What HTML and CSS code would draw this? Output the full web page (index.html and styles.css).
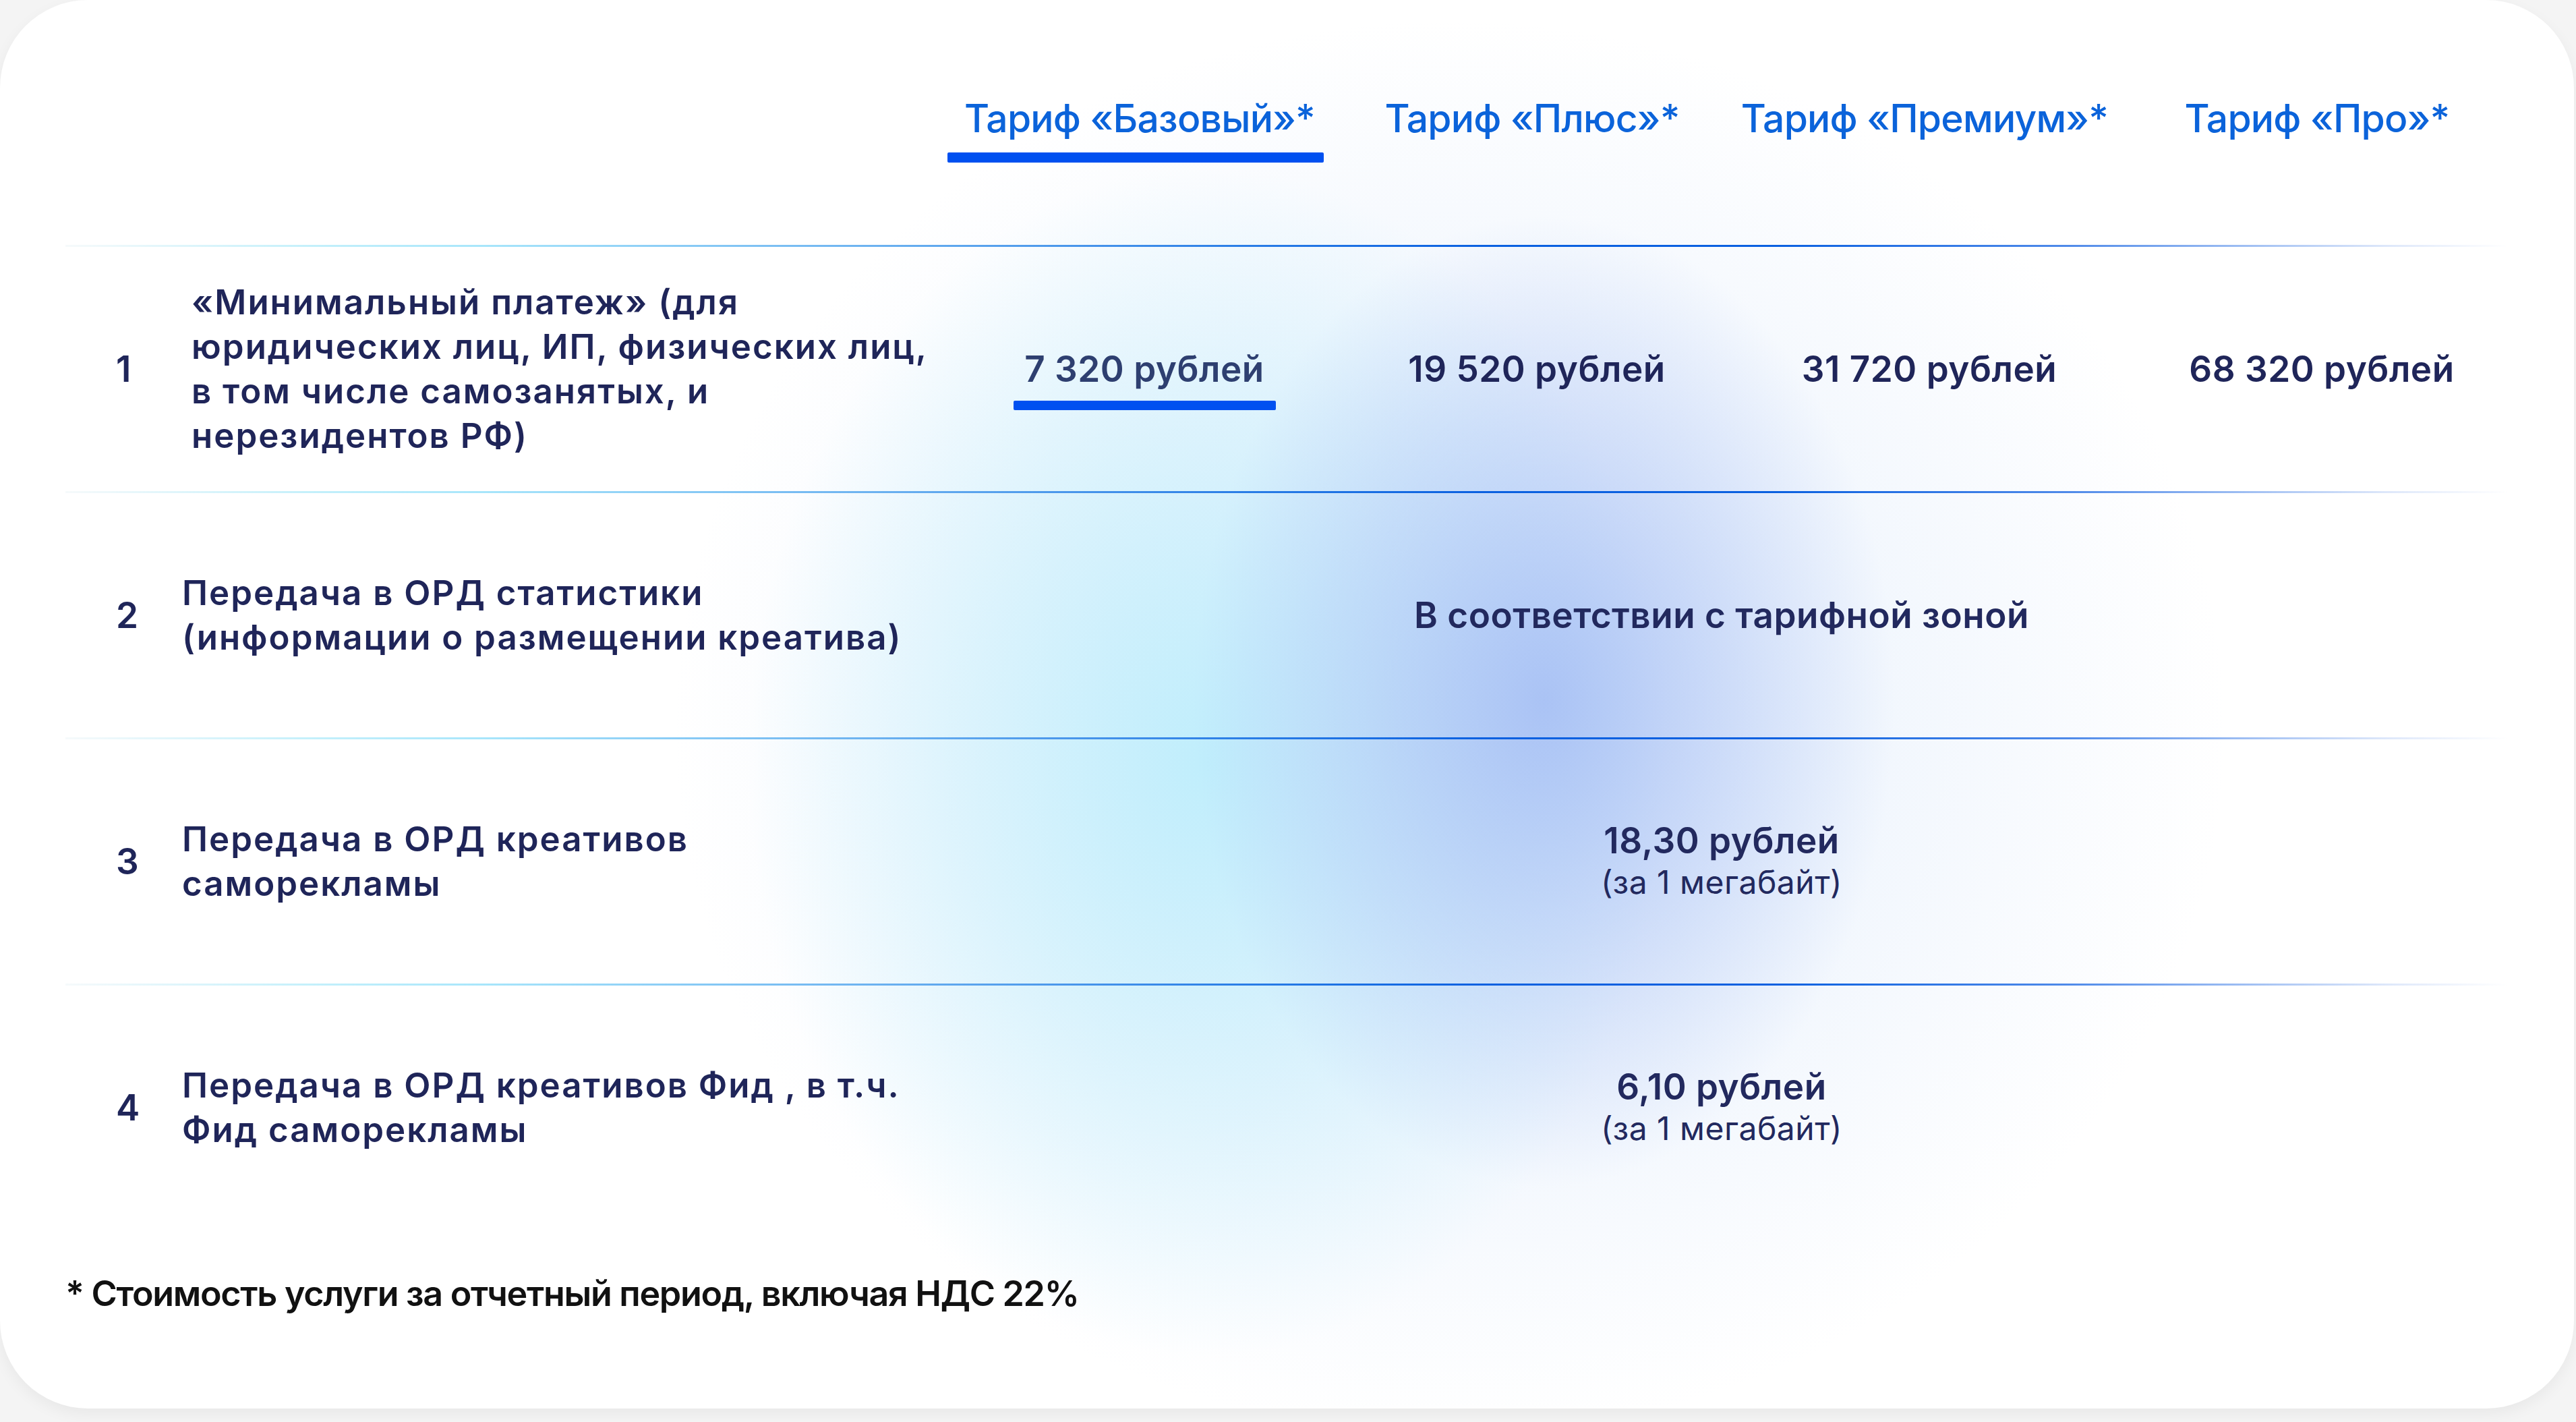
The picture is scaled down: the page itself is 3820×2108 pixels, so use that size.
FILE: index.html
```html
<!DOCTYPE html>
<html lang="ru">
<head>
<meta charset="utf-8">
<title>Тарифы</title>
<link rel="stylesheet" href="styles.css">
</head>
<body>
<div class="card">
  <div class="table">
    <div class="head">
      <div class="cell-empty"></div>
      <div class="cell-empty"></div>
      <div class="tab active"><span class="tab-text">Тариф «Базовый»*</span><span class="tab-bar"></span></div>
      <div class="tab"><span class="tab-text">Тариф «Плюс»*</span></div>
      <div class="tab"><span class="tab-text">Тариф «Премиум»*</span></div>
      <div class="tab"><span class="tab-text">Тариф «Про»*</span></div>
    </div>
    <div class="rule"></div>
    <div class="row">
      <div class="num">1</div>
      <div class="desc desc-first">«Минимальный платеж» (для<br>юридических лиц, ИП, физических лиц,<br>в том числе самозанятых, и<br>нерезидентов РФ)</div>
      <div class="price active"><span class="price-text">7 320 рублей</span><span class="price-bar"></span></div>
      <div class="price"><span class="price-text">19 520 рублей</span></div>
      <div class="price"><span class="price-text">31 720 рублей</span></div>
      <div class="price"><span class="price-text">68 320 рублей</span></div>
    </div>
    <div class="rule"></div>
    <div class="row">
      <div class="num">2</div>
      <div class="desc">Передача в ОРД статистики<br>(информации о размещении креатива)</div>
      <div class="merged"><span class="merged-text">В соответствии с тарифной зоной</span></div>
    </div>
    <div class="rule"></div>
    <div class="row">
      <div class="num">3</div>
      <div class="desc">Передача в ОРД креативов<br>саморекламы</div>
      <div class="merged"><span class="merged-text">18,30 рублей</span><span class="merged-sub">(за 1 мегабайт)</span></div>
    </div>
    <div class="rule"></div>
    <div class="row">
      <div class="num">4</div>
      <div class="desc">Передача в ОРД креативов Фид , в т.ч.<br>Фид саморекламы</div>
      <div class="merged"><span class="merged-text">6,10 рублей</span><span class="merged-sub">(за 1 мегабайт)</span></div>
    </div>
  </div>
  <p class="note">* Стоимость услуги за отчетный период, включая НДС 22%</p>
</div>
</body>
</html>
```

FILE: styles.css
```css
* { box-sizing: border-box; }

html, body {
  margin: 0;
  padding: 0;
}

body {
  background: #f4f4f4;
  font-family: "Inter", "Noto Sans", "DejaVu Sans", sans-serif;
  color: #1f2559;
  width: 3820px;
  height: 2108px;
  overflow: hidden;
}

.card {
  width: 3817px;
  height: 2088px;
  border-radius: 130px;
  box-shadow: 0 8px 22px rgba(0, 0, 0, 0.05);
  padding: 0 93px 0 97px;
  background:
    radial-gradient(ellipse 520px 720px at 2290px 1040px, rgba(165, 190, 244, 0.9), rgba(165, 190, 244, 0) 100%),
    radial-gradient(ellipse 680px 880px at 1790px 1130px, rgba(192, 238, 252, 1), rgba(192, 238, 252, 0) 100%),
    radial-gradient(ellipse 1150px 1050px at 2150px 1080px, rgba(215, 230, 250, 0.75), rgba(215, 230, 250, 0) 100%),
    #ffffff;
}

.table {
  display: flex;
  flex-direction: column;
}

.head,
.row {
  display: grid;
  grid-template-columns: 173px 1129px repeat(4, 582px);
}

.head {
  height: 363px;
  padding-top: 141px;
}

.tab {
  display: flex;
  flex-direction: column;
  align-items: center;
}

.tab-text {
  font-size: 57px;
  line-height: 70px;
  font-weight: 500;
  color: #0b63da;
  white-space: nowrap;
  letter-spacing: -0.8px;
}

.tab-bar {
  display: block;
  width: 558px;
  height: 15px;
  margin-top: 15px;
  margin-left: -12px;
  background: #0050f0;
  border-radius: 2px;
}

.rule {
  height: 3px;
  margin-right: 5px;
  background: linear-gradient(90deg,
    rgba(225, 238, 242, 0.3) 0%,
    #c4f0fb 10%,
    #a8e6fb 17%,
    #6cb2f0 33%,
    #2b7ee6 48%,
    #0a60e0 58%,
    #0a60e0 70%,
    #4f8ae9 82%,
    rgba(120, 160, 235, 0.25) 95%,
    rgba(255, 255, 255, 0) 100%);
}

.row {
  height: 362px;
  align-items: center;
}

.num {
  padding-left: 75px;
  font-size: 53px;
  font-weight: 600;
  line-height: 66px;
}

.desc {
  font-size: 51px;
  line-height: 66px;
  font-weight: 600;
  white-space: nowrap;
  letter-spacing: 2px;
}

.desc-first {
  padding-left: 14px;
}

.price {
  position: relative;
  display: flex;
  justify-content: center;
  padding-left: 14px;
}

.price-text {
  font-size: 53px;
  line-height: 66px;
  font-weight: 600;
  white-space: nowrap;
  letter-spacing: 0.5px;
}

.price.active .price-text {
  color: #2e3f70;
}

.price-bar {
  position: absolute;
  left: 104px;
  top: 80px;
  width: 389px;
  height: 14px;
  background: #0050f0;
  border-radius: 2px;
}

.merged {
  grid-column: span 4;
  display: flex;
  flex-direction: column;
  align-items: center;
  padding-right: 20px;
}

.merged-text {
  font-size: 53px;
  line-height: 61px;
  font-weight: 600;
  color: #22295e;
  white-space: nowrap;
  letter-spacing: 0.5px;
}

.merged-sub {
  font-size: 48px;
  line-height: 61px;
  font-weight: 400;
  color: #22295e;
  white-space: nowrap;
  letter-spacing: 0.5px;
}

.note {
  margin: 62px 0 0 0;
  font-size: 52px;
  line-height: 66px;
  font-weight: 600;
  color: #111111;
  letter-spacing: -1.3px;
}
```
